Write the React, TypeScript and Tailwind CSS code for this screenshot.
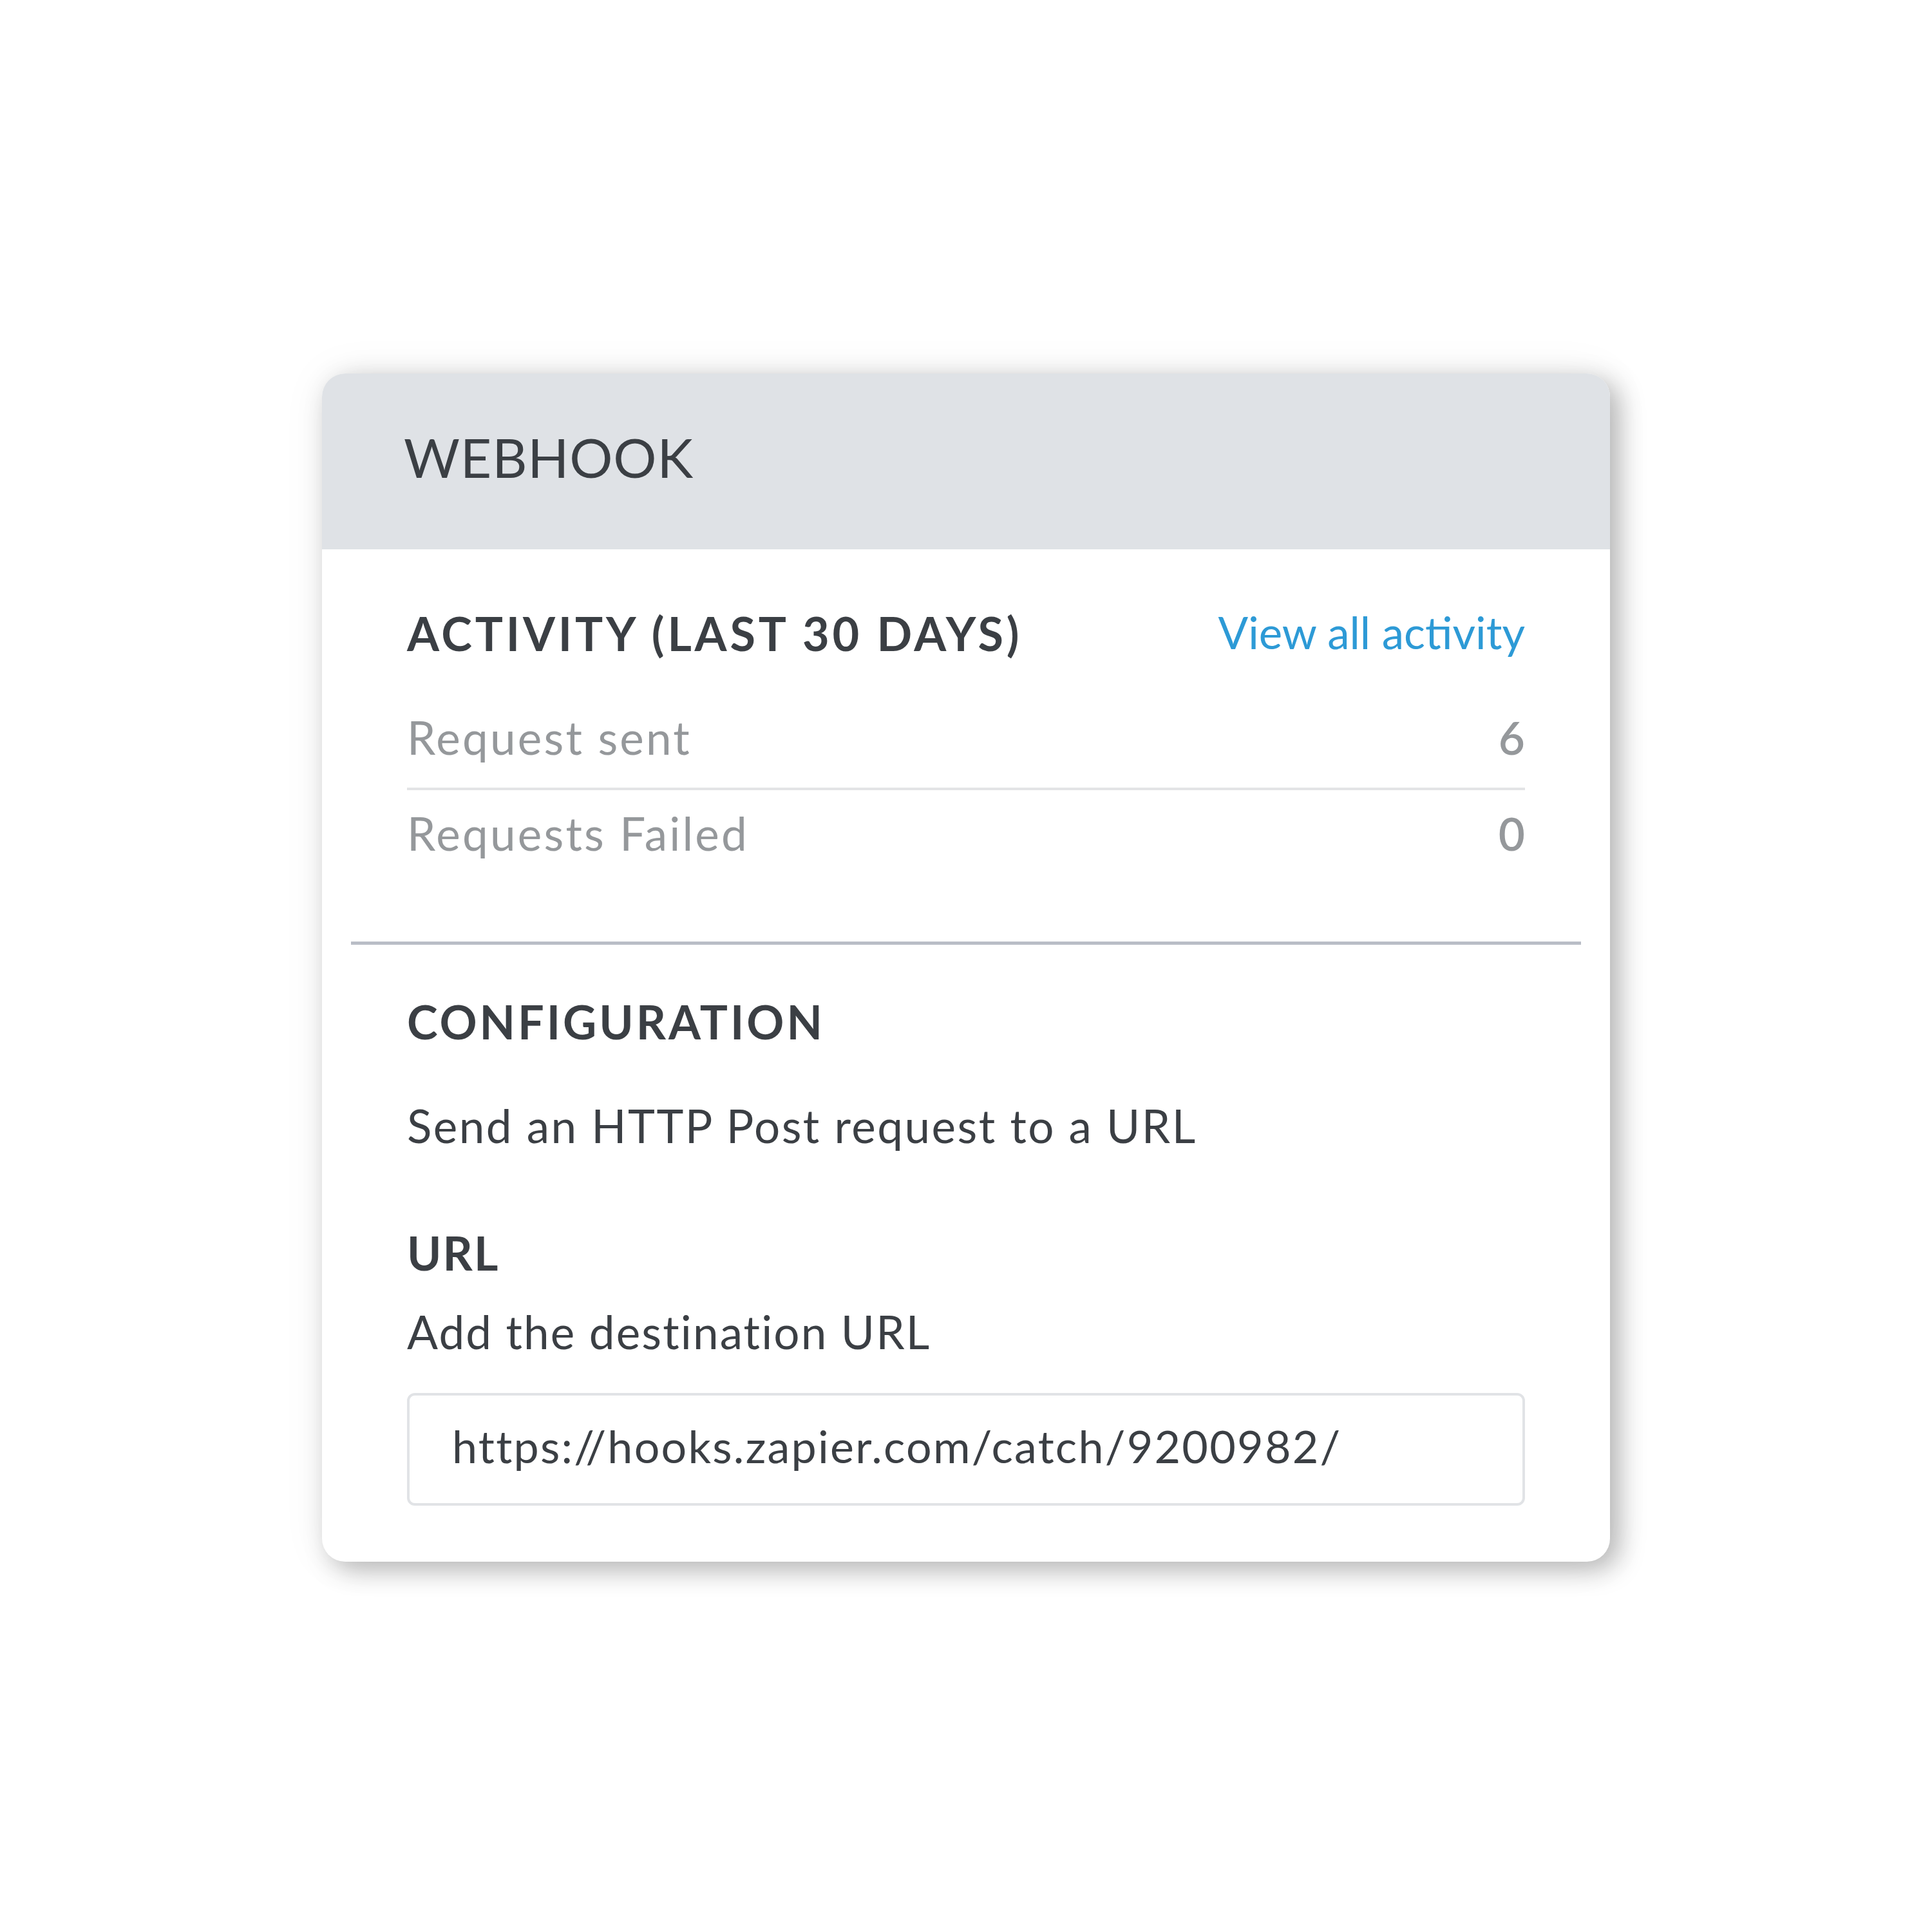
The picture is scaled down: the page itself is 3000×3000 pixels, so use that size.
import React from "react";

const font = { fontFamily: "Lato, 'Noto Sans', sans-serif" };

function StatRow({ label, value, divider }: { label: string; value: string; divider?: boolean }) {
  return (
    <div
      className={
        divider
          ? "flex items-start justify-between border-b-[4px] border-[#e3e4e6] pb-[43px]"
          : "flex items-start justify-between pt-[31px]"
      }
    >
      <span className="text-[71px] leading-none tracking-[0.045em] text-[#95989b]">{label}</span>
      <span className="text-[71px] leading-none font-semibold text-[#95989b]">{value}</span>
    </div>
  );
}

export default function App() {
  return (
    <div className="w-[3000px] h-[3000px] bg-white pt-[580px] pl-[500px]" style={font}>
      <div className="w-[2000px] rounded-[36px] overflow-hidden bg-white shadow-[14px_12px_40px_rgba(0,0,0,0.28),0_0_70px_rgba(0,0,0,0.06)]">
        {/* header */}
        <div className="h-[273px] bg-[#dfe2e6] pt-[88px] pl-[127px]">
          <h1 className="text-[84px] leading-none font-normal tracking-[0.01em] text-[#3b3f44]">WEBHOOK</h1>
        </div>

        {/* activity */}
        <div className="px-[132px] pt-[94px]">
          <div className="flex items-start justify-between">
            <h2 className="text-[72px] leading-none font-bold tracking-[0.067em] text-[#3b3f44]">
              ACTIVITY (LAST 30 DAYS)
            </h2>
            <a href="#" className="text-[69px] leading-none text-[#2d9ad6]">
              View all activity
            </a>
          </div>
          <div className="mt-[90px]">
            <StatRow label="Request sent" value="6" divider />
            <StatRow label="Requests Failed" value="0" />
          </div>
        </div>

        <div className="mx-[45px] mt-[133px] h-[5px] bg-[#b9bdc6]" />

        {/* configuration */}
        <div className="px-[132px] pt-[83px] pb-[87px] text-[#3b3f44]">
          <h2 className="text-[72px] leading-none font-bold tracking-[0.055em]">CONFIGURATION</h2>
          <p className="mt-[90px] text-[71px] leading-none tracking-[0.035em]">Send an HTTP Post request to a URL</p>
          <h3 className="mt-[126px] text-[72px] leading-none font-bold tracking-[0.03em]">URL</h3>
          <p className="mt-[51px] text-[71px] leading-none tracking-[0.03em]">Add the destination URL</p>
          <div className="mt-[60px] h-[175px] rounded-[12px] border-[4px] border-[#e1e3e6] pl-[66px] pt-[43px]">
            <span className="text-[70px] leading-none tracking-[0.032em]">https://hooks.zapier.com/catch/9200982/</span>
          </div>
        </div>
      </div>
    </div>
  );
}
